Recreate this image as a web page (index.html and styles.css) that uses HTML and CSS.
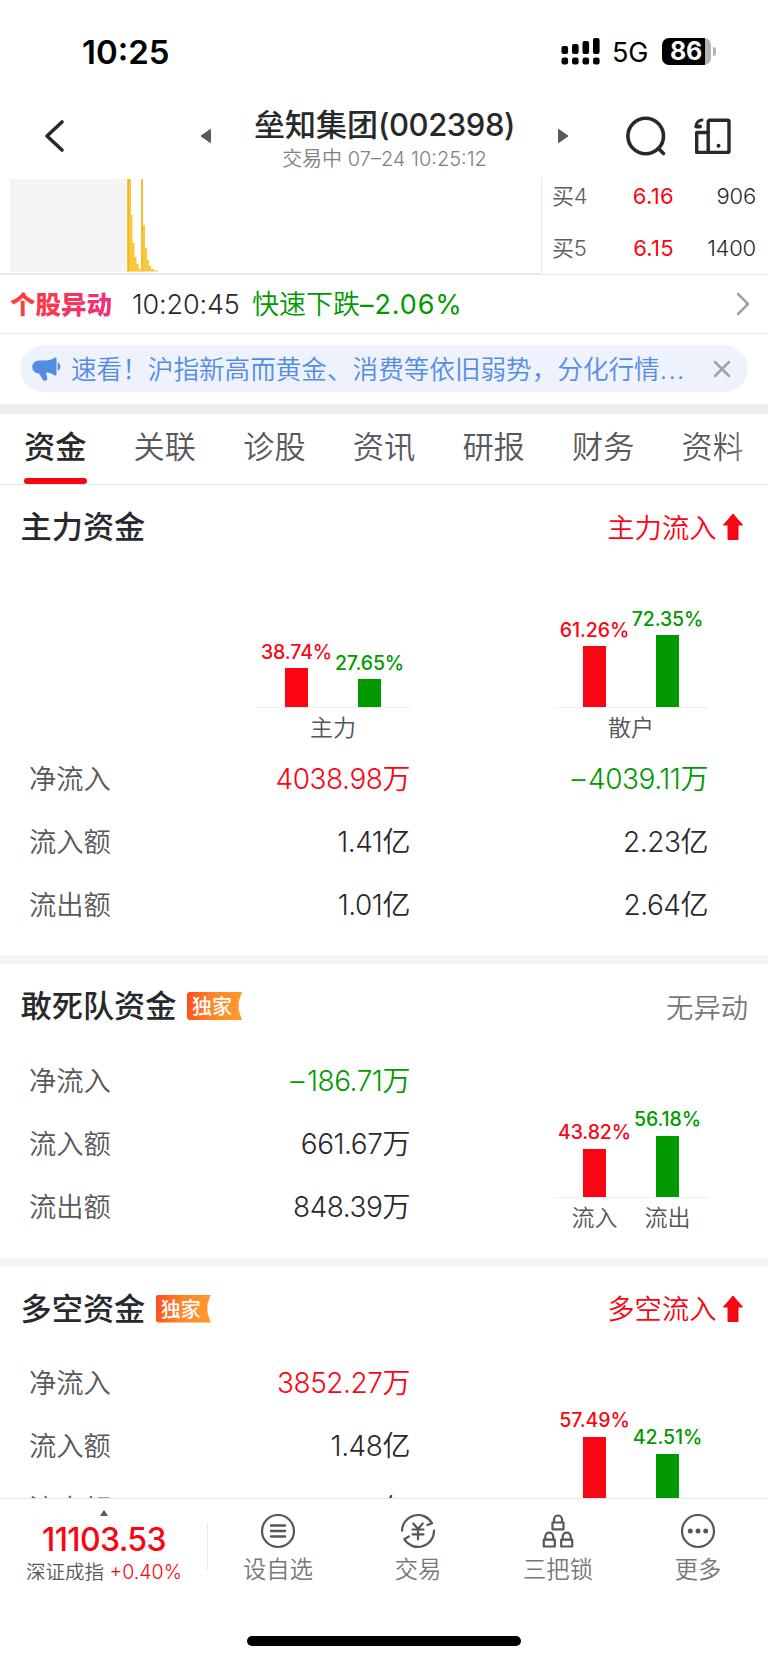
FILE: index.html
```html
<!DOCTYPE html>
<html lang="zh-CN">
<head>
<meta charset="utf-8">
<title>垒知集团(002398)</title>
<link rel="stylesheet" href="styles.css">
</head>
<body>
<div class="screen">
  <div class="status">
    <span class="clock">10:25</span>
    <svg class="signal" width="40" height="29" viewBox="0 0 40 29">
      <rect x="0.5" y="9" width="6.6" height="8" rx="2"/><rect x="11" y="7" width="6.6" height="10" rx="2"/><rect x="21.500" y="4" width="6.600" height="13" rx="2"/><rect x="32" y="1" width="6.600" height="16" rx="2"/>
      <rect x="0.5" y="20.500" width="6.600" height="7" rx="2.200"/><rect x="11" y="20.500" width="6.600" height="7" rx="2.200"/><rect x="21.500" y="20.500" width="6.600" height="7" rx="2.200"/><rect x="32" y="20.500" width="6.600" height="7" rx="2.200"/>
    </svg>
    <span class="net">5G</span>
    <div class="battery"><div class="cell"><span class="pct">86</span></div><i class="cap"></i></div>
  </div>

  <header class="head">
    <svg class="back" width="22" height="36" viewBox="0 0 22 36"><path d="M18 4 3 18l15 14" fill="none" stroke="#29292b" stroke-width="3.600" stroke-linecap="round" stroke-linejoin="round"/></svg>
    <svg class="prev" width="12" height="16" viewBox="0 0 12 16"><path d="M10.500 1.300 1 8l9.500 6.700z" fill="#5a5a5c" stroke="#5a5a5c" stroke-width="1" stroke-linejoin="round"/></svg>
    <div class="titles">
      <div class="name">垒知集团<span class="code">(002398)</span></div>
      <div class="time">交易中 <span>07–24 10:25:12</span></div>
    </div>
    <svg class="next" width="12" height="16" viewBox="0 0 12 16"><path d="M1.500 1.300 11 8l-9.500 6.700z" fill="#5a5a5c" stroke="#5a5a5c" stroke-width="1" stroke-linejoin="round"/></svg>
    <svg class="find" width="42" height="42" viewBox="0 0 42 42" fill="none" stroke="#29292b" stroke-width="3.600" stroke-linecap="round"><circle cx="20.700" cy="21" r="17.800"/><path d="m33.500 33.500 5 5"/></svg>
    <svg class="cards" width="38" height="38" viewBox="0 0 38 38" fill="none" stroke="#29292b" stroke-width="3.400" stroke-linejoin="round" stroke-linecap="round"><rect x="14.200" y="3.200" width="20.800" height="32.200" rx="1.500"/><path d="M14 15.500H2.700v19.900H14"/><path d="M2 9.500C2 6 4.500 3.300 8 3" stroke-width="3"/><path d="M2.500 9.500h3.500" stroke-width="4"/><circle cx="24.500" cy="28.800" r="2" fill="#29292b" stroke="none"/></svg>
  </header>

  <section class="quote">
    <div class="trend">
      <svg width="541" height="95" viewBox="0 0 541 95">
        <rect x="10" y="0" width="117" height="93" fill="#f4f4f4"/>
        <g fill="#f8c83c"><path d="M127 0h4v36h1.500v28h2v14h2v7h2v4h1.500v2h1V0h2v46h2v23h2v12h2v6h2v3h3v1.500h4v1H127z"/></g>
        <path d="M128.500 0v93M142 0v93" stroke="#f2b51c" stroke-width="1"/>
      </svg>
    </div>
    <div class="book">
      <div class="bid"><span class="lv">买4</span><span class="px">6.16</span><span class="vol">906</span></div>
      <div class="bid"><span class="lv">买5</span><span class="px">6.15</span><span class="vol">1400</span></div>
    </div>
  </section>

  <section class="alert">
    <b class="tag">个股异动</b><span class="at">10:20:45</span><span class="move">快速下跌<span class="pc">–2.06%</span></span>
    <svg class="chev" width="16" height="24" viewBox="0 0 16 24"><path d="m3 2 10 10L3 22" fill="none" stroke="#a4a4a6" stroke-width="2.600" stroke-linecap="round" stroke-linejoin="round"/></svg>
  </section>

  <section class="notice">
    <div class="pill">
      <svg class="horn" width="29" height="26" viewBox="0 0 29 26" fill="#548ce4"><path d="M7.500 4.500H13C17 4.500 20 3.500 22.500 1.800c1-.7 2-.2 2 1v15.400c0 1.200-1 1.700-2 1-2.500-1.600-5-2.500-8.500-2.700l1.300 5.700c.5 2.300-3.300 3.600-4.600 1.200L7 17.500C3 17.300.3 14.500.3 11c0-3.600 3-6.500 7.200-6.500z"/><path d="M25.700 6.200c3.600 2 3.600 6.600 0 8.600z"/></svg>
      <span class="news">速看！沪指新高而黄金、消费等依旧弱势，分化行情<span class="dots">...</span></span>
      <svg class="close" width="18" height="18" viewBox="0 0 18 18"><path d="m2 2 14 14M16 2 2 16" stroke="#a0a3a8" stroke-width="2.500" stroke-linecap="round"/></svg>
    </div>
  </section>

  <nav class="tabs">
    <a class="tab on">资金</a><a class="tab">关联</a><a class="tab">诊股</a><a class="tab">资讯</a><a class="tab">研报</a><a class="tab">财务</a><a class="tab last">资料</a>
  </nav>

  <main class="scroll">
    <section class="fund first">
      <div class="cap-row"><h2>主力资金</h2><span class="flow"><span>主力流入</span><svg width="22" height="28" viewBox="0 0 22 28"><path d="M11 1 20.500 12H16v14.500H6V12H1.500z" fill="#fa0514" stroke="#fa0514" stroke-linejoin="round"/></svg></span></div>
      <div class="charts">
        <div class="chart">
          <div class="bars"><div class="col up"><em>38.74%</em><i style="height:38.500px"></i></div><div class="col down"><em>27.65%</em><i style="height:27.500px"></i></div></div>
          <div class="axis"><span>主力</span></div>
        </div>
        <div class="chart">
          <div class="bars"><div class="col up"><em>61.26%</em><i style="height:60.500px"></i></div><div class="col down"><em>72.35%</em><i style="height:71.500px"></i></div></div>
          <div class="axis"><span>散户</span></div>
        </div>
      </div>
      <div class="table">
        <div class="tr"><span class="k">净流入</span><span class="v up">4038.98万</span><span class="v down"><span class="sign">–</span>4039.11万</span></div>
        <div class="tr"><span class="k">流入额</span><span class="v">1.41亿</span><span class="v">2.23亿</span></div>
        <div class="tr"><span class="k">流出额</span><span class="v">1.01亿</span><span class="v">2.64亿</span></div>
      </div>
    </section>

    <section class="fund">
      <div class="cap-row"><h2>敢死队资金</h2><span class="only">独家</span><span class="flow none"><span>无异动</span></span></div>
      <div class="split">
        <div class="table">
          <div class="tr"><span class="k">净流入</span><span class="v down"><span class="sign">–</span>186.71万</span></div>
          <div class="tr"><span class="k">流入额</span><span class="v">661.67万</span></div>
          <div class="tr"><span class="k">流出额</span><span class="v">848.39万</span></div>
        </div>
        <div class="chart pair">
          <div class="bars"><div class="col up"><em>43.82%</em><i style="height:48.500px"></i></div><div class="col down"><em>56.18%</em><i style="height:61.500px"></i></div></div>
          <div class="axis"><span>流入</span><span>流出</span></div>
        </div>
      </div>
    </section>

    <section class="fund">
      <div class="cap-row"><h2>多空资金</h2><span class="only">独家</span><span class="flow"><span>多空流入</span><svg width="22" height="28" viewBox="0 0 22 28"><path d="M11 1 20.500 12H16v14.500H6V12H1.500z" fill="#fa0514" stroke="#fa0514" stroke-linejoin="round"/></svg></span></div>
      <div class="split">
        <div class="table">
          <div class="tr"><span class="k">净流入</span><span class="v up">3852.27万</span></div>
          <div class="tr"><span class="k">流入额</span><span class="v">1.48亿</span></div>
          <div class="tr"><span class="k">流出额</span><span class="v">1.10亿</span></div>
        </div>
        <div class="chart pair">
          <div class="bars"><div class="col up"><em>57.49%</em><i style="height:63px"></i></div><div class="col down"><em>42.51%</em><i style="height:46px"></i></div></div>
        </div>
      </div>
    </section>
  </main>

  <footer class="dock">
    <div class="index">
      <svg width="10" height="8" viewBox="0 0 10 8"><path d="M5 .8 9 7H1z" fill="#5a5a5c"/></svg>
      <strong>11103.53</strong>
      <div class="idx">深证成指 <span>+0.40%</span></div>
    </div>
    <div class="item">
      <svg width="38" height="38" viewBox="0 0 38 38" fill="none" stroke="#55555a" stroke-width="2.200" stroke-linecap="round"><circle cx="19" cy="19" r="16"/><path d="M12 13.500h14M12 19h14M12 24.500h14" stroke-width="2.400"/></svg>
      <span>设自选</span>
    </div>
    <div class="item">
      <svg width="38" height="38" viewBox="0 0 38 38" fill="none" stroke="#55555a" stroke-width="2.200" stroke-linecap="round" stroke-linejoin="round"><path d="M3 18.800A16 16 0 0 1 33 11.300L28.500 13M35 18.500A16 16 0 0 1 5.300 27.200L9.800 24.500"/><path d="m14.300 11.500 4.700 5.500 4.700-5.500M19 17v10.500M13.500 17.500h11M13.500 22.300h11"/></svg>
      <span>交易</span>
    </div>
    <div class="item">
      <svg width="38" height="38" viewBox="0 0 38 38" fill="none" stroke="#55555a" stroke-width="2.200" stroke-linejoin="round"><rect x="13.500" y="10.500" width="11" height="6.800"/><path d="M15 10.500V7.500a4 4 0 0 1 8 0v3"/><rect x="4.800" y="27.700" width="11" height="6.800"/><path d="M6.300 27.700v-3a4 4 0 0 1 8 0v3"/><rect x="22.200" y="27.700" width="11" height="6.800"/><path d="M23.700 27.700v-3a4 4 0 0 1 8 0v3"/></svg>
      <span>三把锁</span>
    </div>
    <div class="item">
      <svg width="38" height="38" viewBox="0 0 38 38" fill="none" stroke="#55555a" stroke-width="2.200"><circle cx="19" cy="19" r="16"/><g fill="#55555a" stroke="none"><circle cx="11.300" cy="19" r="2.500"/><circle cx="19" cy="19" r="2.500"/><circle cx="26.700" cy="19" r="2.500"/></g></svg>
      <span>更多</span>
    </div>
  </footer>
  <div class="home"><i></i></div>
</div>
</body>
</html>
```

FILE: styles.css
```css
* { box-sizing: border-box; }
body { margin: 0; background: #fff; }
.screen {
  width: 768px; height: 1663px; overflow: hidden; background: #fff;
  display: flex; flex-direction: column;
  font-family: Inter, "Noto Sans CJK SC", sans-serif; color: #28292b; white-space: nowrap;
  font-weight: 350;
}
.screen > * { flex: none; }
.screen svg { display: block; flex: none; }

/* status bar */
.status { height: 92px; padding: 10px 52px 0 82px; display: flex; align-items: center; color: #000; }
.clock { font-size: 33px; font-weight: 600; line-height: 40px; padding-top: 1px; width: 479px; }
.net { font-size: 27px; font-weight: 400; line-height: 36px; width: 50px; margin-left: 11px; letter-spacing: -0.100px; padding-top: 3px; }
.battery { display: flex; align-items: center; gap: 2px; }
.cell { width: 49px; height: 27px; border-radius: 7px; background: linear-gradient(90deg, #000 43px, #b3b3b3 43px); padding-left: 8px; }
.pct { color: #fff; font-size: 25px; font-weight: 700; line-height: 27px; letter-spacing: -0.200px; }
.cap { width: 3px; height: 9px; border-radius: 0 4px 4px 0; background: #b3b3b3; }

/* header */
.head { height: 87px; display: flex; align-items: center; }
.back { margin-left: 44px; }
.prev { margin-left: 134px; }
.titles { width: 345px; text-align: center; padding-top: 6px; }
.next { margin-right: 56px; }
.find { margin-right: 27px; }
.name { font-size: 31px; font-weight: 500; line-height: 40px; height: 40px; }
.code { letter-spacing: -0.450px; font-weight: 450; }
.time { font-size: 20px; line-height: 28px; color: #808084; }

/* chart strip and order book */
.quote { height: 96px; display: flex; border-bottom: 1px solid #e8e8ea; }
.trend { width: 542px; border-right: 1px solid #e8e8ea; border-bottom: 1px solid #e8e8ea; }
.book { flex: 1; padding: 0 12px 0 10px; }
.bid { height: 34px; margin-bottom: 18px; display: flex; align-items: center; font-size: 22px; letter-spacing: -0.200px; }
.lv { width: 70px; color: #5c5c60; margin-top: -4px; }
.px { width: 52px; text-align: right; color: #fa0514; letter-spacing: 0.300px; font-weight: 400; }
.vol { flex: 1; text-align: right; }

/* alert row */
.alert { height: 59px; border-bottom: 1px solid #e8e8ea; display: flex; align-items: center; padding: 0 17px 0 10px; font-size: 27px; }
.tag { width: 122px; margin-top: -4px; font-size: 25.500px; font-weight: 900; color: transparent; background: linear-gradient(90deg, #ff4030, #f42a80 105px); -webkit-background-clip: text; background-clip: text; }
.at { width: 120px; letter-spacing: -0.150px; }
.move { flex: 1; margin-top: -4px; color: #009a00; }
.pc { letter-spacing: 0.900px; font-weight: 380; }

/* notice */
.notice { height: 80px; padding: 11px 20px 0; border-bottom: 10px solid #ededef; }
.pill { height: 47px; border-radius: 24px; background: #edf2fc; display: flex; align-items: center; padding: 0 17px 0 12px; }
.news { margin: -3px 0 0 10px; flex: 1; color: #548ce4; font-size: 25.600px; }
.dots { letter-spacing: 1.500px; }

/* tabs */
.tabs { height: 71px; border-bottom: 1px solid #e8e8ea; display: flex; padding-left: 24px; }
.tab { width: 109.600px; font-size: 31.200px; line-height: 66px; height: 70px; color: #58585c; }
.on { width: 63px; margin-right: 46.600px; color: #28292b; font-weight: 500; }
.on::after { content: ""; display: block; height: 6px; margin-top: -2px; border-radius: 3px; background: #fa0514; }
.tab.last { width: 86px; background: linear-gradient(90deg, #58585c 52px, #b0b0b4 63px); color: transparent; -webkit-background-clip: text; background-clip: text; }

/* fund sections */
.scroll { height: 1013px; overflow: hidden; }
.fund { border-bottom: 9px solid #f4f4f5; height: 302.500px; }
.fund.first { height: 479px; }
.cap-row { height: 84px; padding: 0 20px 0 20.500px; display: flex; align-items: center; }
h2 { margin: 0; font-size: 31.200px; font-weight: 500; line-height: 46px; }
.flow { margin-left: auto; display: flex; align-items: center; gap: 5px; color: #fa0514; font-size: 27.300px; padding-right: 4.500px; line-height: 40px; }
.flow span { padding-top: 3px; }
.flow.none { color: #77777a; padding: 2px 0 0; }
.only { margin-left: 10.500px; width: 55px; height: 28px; padding-left: 5px; line-height: 30px; font-size: 20px; font-weight: 500; color: #fff; background: linear-gradient(100deg, #ff4a1c, #ff8528 45%, #ff9c30); clip-path: polygon(0 2px, 2px 0, 100% 0, 94% 35%, 94% 65%, 100% 100%, 2px 100%, 0 26px); }
.charts { height: 176px; display: flex; justify-content: flex-end; gap: 143px; padding: 0 59.500px 0 0; }
.chart { width: 155px; display: flex; flex-direction: column; }
.charts .chart { padding-top: 38px; }
.bars { flex: none; height: 100.500px; display: flex; align-items: flex-end; justify-content: center; border-bottom: 1px solid #f0f0f2; }
.col { width: 73px; display: flex; flex-direction: column; align-items: center; }
.col em { font-style: normal; font-weight: 500; font-size: 19.500px; line-height: 24px; margin-bottom: 4.500px; letter-spacing: -0.100px; }
.col i { width: 23.500px; }
.col.up i { background: #fa0514; }
.col.down i { background: #009a00; }
.up { color: #fa0514; }
.down { color: #009a00; }
.axis { display: flex; justify-content: center; font-size: 23px; line-height: 40px; color: #55555a; }
.axis span { width: 73px; text-align: center; }
.table { padding: 0 0 0 29px; }
.tr { height: 63px; display: flex; align-items: center; }
.k { width: 120px; font-size: 27.300px; color: #58585c; }
.v { width: 261px; text-align: right; font-size: 28px; letter-spacing: -0.450px; }
.v + .v { width: 298px; }
.sign { margin-right: 3px; }
.split { display: flex; height: 209px; }
.split .table { margin-top: -1px; width: 410px; }
.pair { margin-left: 143.500px; padding-top: 49px; }
.pair .bars { height: 101px; }

/* bottom dock */
.dock { height: 110px; border-top: 1px solid #e8e8ea; display: flex; background: #fff; }
.index { width: 208px; display: flex; flex-direction: column; align-items: center; padding-top: 10px; background: linear-gradient(#e8e8ea, #e8e8ea) right 24px / 1px 47px no-repeat; }
.index strong { font-size: 32px; line-height: 38px; margin-top: 4px; font-weight: 500; color: #fa0514; letter-spacing: -0.650px; }
.idx { font-size: 19.500px; line-height: 26px; color: #58585c; }
.idx span { color: #fa0514; }
.item { width: 140px; display: flex; flex-direction: column; align-items: center; padding-top: 13px; color: #77777a; font-size: 23.300px; line-height: 36px; }
.item span { margin-top: 2px; }
.home { flex: 1; display: flex; justify-content: center; padding-top: 28px; }
.home i { width: 274px; height: 10px; border-radius: 5px; background: #000; }
```
